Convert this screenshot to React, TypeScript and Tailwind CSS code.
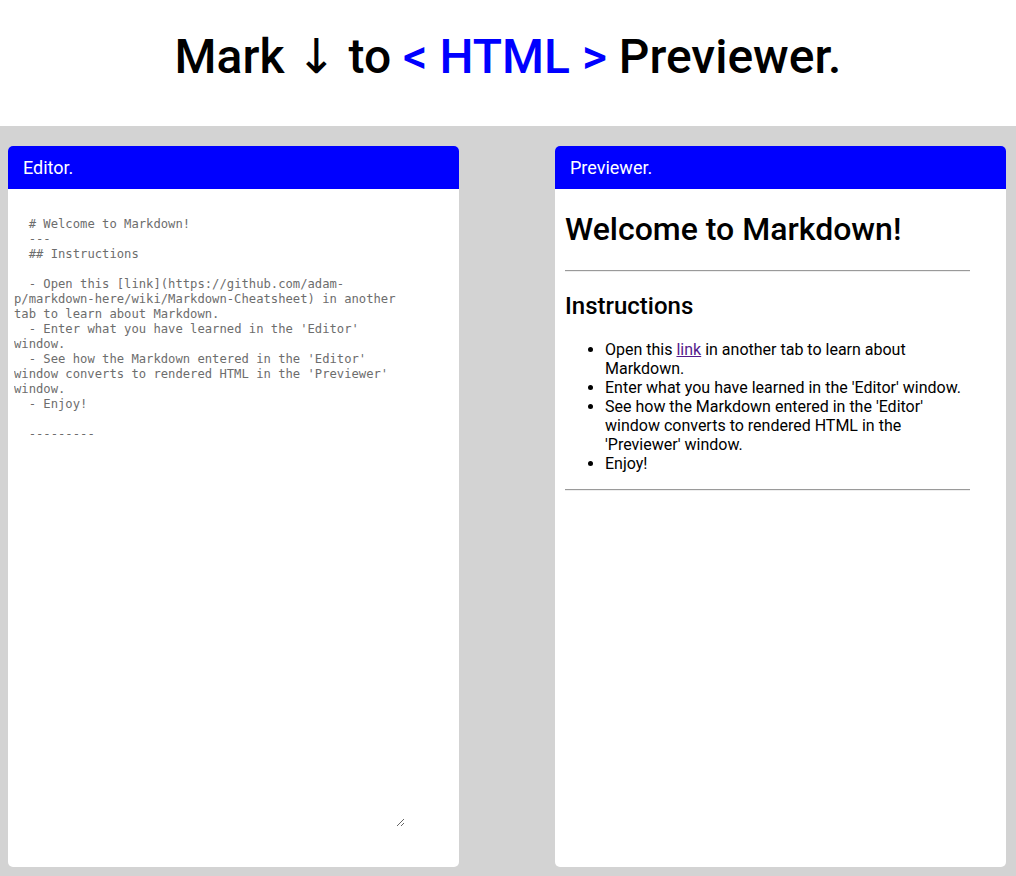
import type React from "react";
import { useState } from "react";

const initialMarkdown = `  # Welcome to Markdown!
  ---
  ## Instructions

  - Open this [link](https://github.com/adam-p/markdown-here/wiki/Markdown-Cheatsheet) in another tab to learn about Markdown.
  - Enter what you have learned in the 'Editor' window.
  - See how the Markdown entered in the 'Editor' window converts to rendered HTML in the 'Previewer' window.
  - Enjoy!

  ---------`;

const font = { fontFamily: "Roboto, 'Noto Sans', sans-serif" };

function PanelHeader({ title }: { title: string }) {
  return (
    <div className="flex h-[43px] items-center rounded-t-[5px] bg-[#0000ff] pl-[15px] text-[18px] text-white">
      {title}
    </div>
  );
}

function Rule() {
  return (
    <hr className="h-[2px] w-full border-t border-b border-t-[#9a9a9a] border-b-[#eeeeee]" />
  );
}

function Preview() {
  return (
    <div className="w-[415px] pl-[10px] text-black">
      <h1 className="mt-[22px] mb-[22px] text-[32px] leading-[37px] font-medium">
        Welcome to Markdown!
      </h1>
      <Rule />
      <h2 className="my-[20px] text-[24px] leading-[28px] font-medium">
        Instructions
      </h2>
      <ul className="my-[16px] list-disc pl-[40px] text-[16px] leading-[19px]">
        <li>
          Open this{" "}
          <a
            href="#"
            className="text-[#551a8b] underline"
            onClick={(e) => e.preventDefault()}
          >
            link
          </a>{" "}
          in another tab to learn about Markdown.
        </li>
        <li>Enter what you have learned in the 'Editor' window.</li>
        <li>
          See how the Markdown entered in the 'Editor' window converts to
          rendered HTML in the 'Previewer' window.
        </li>
        <li>Enjoy!</li>
      </ul>
      <Rule />
    </div>
  );
}

export default function App() {
  const [markdown, setMarkdown] = useState(initialMarkdown);

  const onChange = (e: React.ChangeEvent<HTMLTextAreaElement>) => {
    setMarkdown(e.target.value);
  };

  return (
    <div className="flex min-h-[876px] flex-col bg-[#d3d3d3]" style={font}>
      <header className="flex h-[126px] items-center justify-center bg-white pb-[14px]">
        <h1 className="text-[48px] leading-none font-medium text-black">
          Mark{" "}
          <span style={{ fontFamily: "'DejaVu Sans', sans-serif" }} className="font-normal">
            ↓
          </span>{" "}
          to <span className="text-[#0000ff]">&lt; HTML &gt;</span> Previewer.
        </h1>
      </header>
      <main className="flex justify-between pt-[20px] pr-[10px] pl-[8px]">
        <section className="flex h-[721px] w-[451px] flex-col rounded-[5px] bg-white">
          <PanelHeader title="Editor." />
          <textarea
            value={markdown}
            onChange={onChange}
            spellCheck={false}
            className="mt-[28px] ml-[6px] h-[610px] w-[391px] resize bg-white p-0 text-[12.2px] leading-[15px] text-[#6d6d6d] outline-none"
            style={{ fontFamily: "'DejaVu Sans Mono', monospace" }}
          />
        </section>
        <section className="flex h-[721px] w-[451px] flex-col rounded-[5px] bg-white">
          <PanelHeader title="Previewer." />
          <Preview />
        </section>
      </main>
    </div>
  );
}
